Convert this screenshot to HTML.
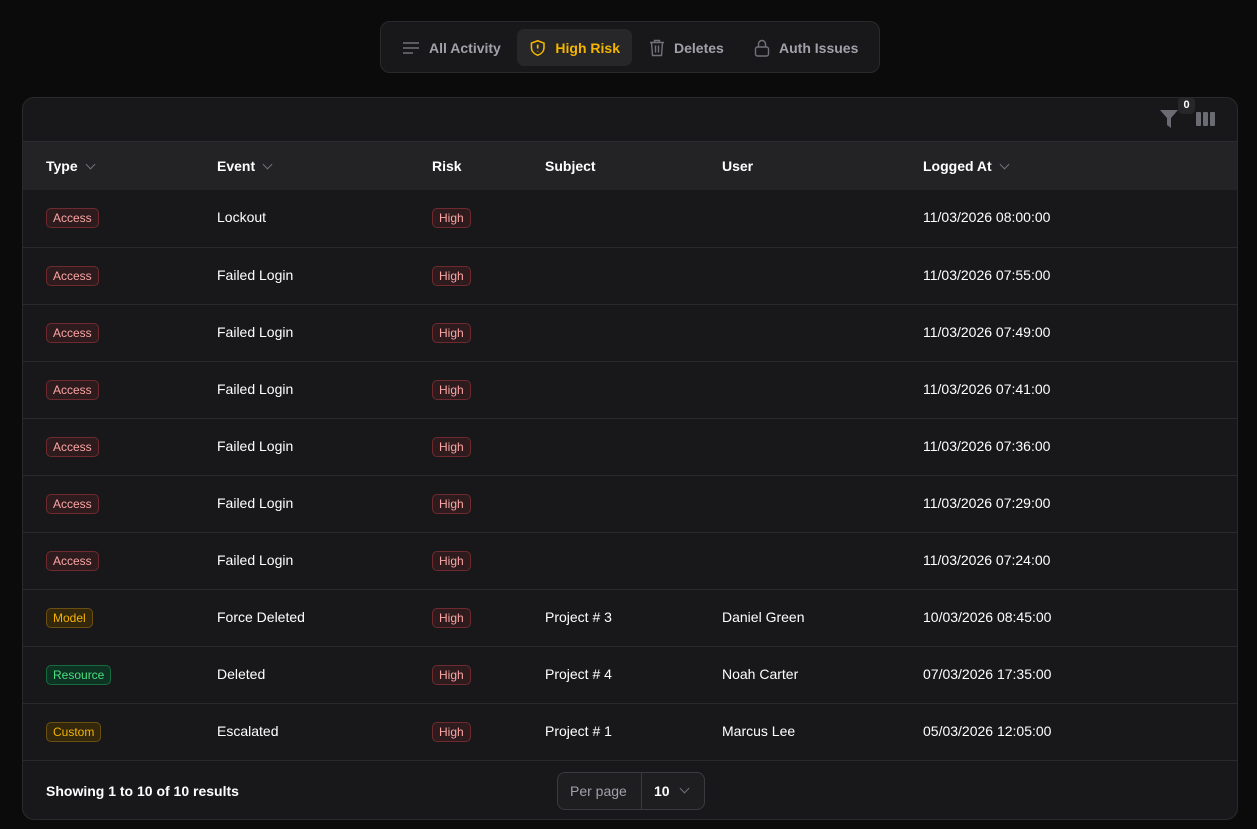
<!DOCTYPE html><html><head><style>
*{box-sizing:border-box;margin:0;padding:0}
body{width:1257px;height:829px;background:#0b0b0c;font-family:"Liberation Sans",sans-serif;color:#fff;position:relative;overflow:hidden}
.tabs{position:absolute;left:380px;top:21px;width:500px;height:52px;background:#18181b;border:1px solid #2a2a2d;border-radius:10px}
.tab{position:absolute;top:7px;height:37px;display:flex;align-items:center;font-size:14px;font-weight:bold;color:#a1a1aa;gap:9px;white-space:nowrap}
.tab.act{background:#27272a;border-radius:7px;color:#f5b400;padding:0 12px}
.card{position:absolute;left:22px;top:97px;width:1216px;height:723px;background:#18181b;border:1px solid #2a2a2d;border-radius:12px;overflow:hidden}
.hdr{position:absolute;left:0;top:43px;width:100%;height:49px;background:#232326;border-top:1px solid #2c2c30}
.c{position:absolute;font-size:14px;font-weight:bold;color:#fff;white-space:nowrap}
.row{position:absolute;left:0;width:100%;height:57px;border-top:1px solid #2a2a2d}
.b{position:absolute;top:18px;font-size:12px;padding:2px 6px;border-radius:5px;border:1px solid}
.red{color:#fca5a5;background:#2e1b1d;border-color:#6e2a2e}
.yel{color:#f5b400;background:#33270c;border-color:#6b4f10}
.grn{color:#4ade80;background:#0f3323;border-color:#166c3e}
.t{position:absolute;top:19px;font-size:14px;color:#fff}
.chev{display:inline-block;width:7px;height:7px;border-right:1.5px solid #71717a;border-bottom:1.5px solid #71717a;transform:rotate(45deg);margin-left:9px;position:relative;top:-3px}
</style></head><body>
<div class="tabs">
<div class="tab" style="left:21px"><svg width="18" height="14"><path d="M1 2h16M1 7h16M1 12h10" stroke="#71717a" stroke-width="1.5"/></svg>All Activity</div>
<div class="tab act" style="left:136px;width:115px"><svg width="18" height="18" viewBox="0 0 18 18"><path d="M9 1.5l6.5 2.5v4.5c0 4-3 6.8-6.5 8-3.5-1.2-6.5-4-6.5-8V4z" fill="none" stroke="#f5b400" stroke-width="1.6"/><path d="M9 5.5v4M9 12v.5" stroke="#f5b400" stroke-width="1.8"/></svg>High Risk</div>
<div class="tab" style="left:268px"><svg width="16" height="18" viewBox="0 0 16 18"><path d="M1 3.5h14M5.5 3.5V1.5h5v2M2.5 3.5l1 13h9l1-13M6.5 6.5v7M9.5 6.5v7" fill="none" stroke="#71717a" stroke-width="1.4"/></svg>Deletes</div>
<div class="tab" style="left:373px"><svg width="16" height="18" viewBox="0 0 16 18"><rect x="1.5" y="8" width="13" height="9" rx="2" fill="none" stroke="#71717a" stroke-width="1.4"/><path d="M4.5 8V5a3.5 3.5 0 0 1 7 0v3" fill="none" stroke="#71717a" stroke-width="1.4"/></svg>Auth Issues</div>
</div>
<div class="card">
<svg style="position:absolute;left:1137px;top:12px" width="18" height="18"><path d="M0 0h18l-7 8v10l-4-3V8z" fill="#6b6b73"/></svg>
<div style="position:absolute;left:1155px;top:-1px;width:17px;height:17px;background:#27272a;border-radius:5px;font-size:11px;font-weight:bold;text-align:center;line-height:17px;color:#fff">0</div>
<svg style="position:absolute;left:1173px;top:14px" width="19" height="14"><rect x="0" y="0" width="5" height="14" rx="1" fill="#6b6b73"/><rect x="7" y="0" width="5" height="14" rx="1" fill="#6b6b73"/><rect x="14" y="0" width="5" height="14" rx="1" fill="#6b6b73"/></svg>
<div class="hdr">
<div class="c" style="left:23px;top:16px">Type<span class="chev"></span></div>
<div class="c" style="left:194px;top:16px">Event<span class="chev"></span></div>
<div class="c" style="left:409px;top:16px">Risk</div>
<div class="c" style="left:522px;top:16px">Subject</div>
<div class="c" style="left:699px;top:16px">User</div>
<div class="c" style="left:900px;top:16px">Logged At<span class="chev"></span></div>
</div>
<div class="row" style="top:92px;border-top:none"><span class="b red" style="left:23px">Access</span><span class="t" style="left:194px">Lockout</span><span class="b red" style="left:409px">High</span><span class="t" style="left:900px">11/03/2026 08:00:00</span></div>
<div class="row" style="top:149px"><span class="b red" style="left:23px">Access</span><span class="t" style="left:194px">Failed Login</span><span class="b red" style="left:409px">High</span><span class="t" style="left:900px">11/03/2026 07:55:00</span></div>
<div class="row" style="top:206px"><span class="b red" style="left:23px">Access</span><span class="t" style="left:194px">Failed Login</span><span class="b red" style="left:409px">High</span><span class="t" style="left:900px">11/03/2026 07:49:00</span></div>
<div class="row" style="top:263px"><span class="b red" style="left:23px">Access</span><span class="t" style="left:194px">Failed Login</span><span class="b red" style="left:409px">High</span><span class="t" style="left:900px">11/03/2026 07:41:00</span></div>
<div class="row" style="top:320px"><span class="b red" style="left:23px">Access</span><span class="t" style="left:194px">Failed Login</span><span class="b red" style="left:409px">High</span><span class="t" style="left:900px">11/03/2026 07:36:00</span></div>
<div class="row" style="top:377px"><span class="b red" style="left:23px">Access</span><span class="t" style="left:194px">Failed Login</span><span class="b red" style="left:409px">High</span><span class="t" style="left:900px">11/03/2026 07:29:00</span></div>
<div class="row" style="top:434px"><span class="b red" style="left:23px">Access</span><span class="t" style="left:194px">Failed Login</span><span class="b red" style="left:409px">High</span><span class="t" style="left:900px">11/03/2026 07:24:00</span></div>
<div class="row" style="top:491px"><span class="b yel" style="left:23px">Model</span><span class="t" style="left:194px">Force Deleted</span><span class="b red" style="left:409px">High</span><span class="t" style="left:522px">Project # 3</span><span class="t" style="left:699px">Daniel Green</span><span class="t" style="left:900px">10/03/2026 08:45:00</span></div>
<div class="row" style="top:548px"><span class="b grn" style="left:23px">Resource</span><span class="t" style="left:194px">Deleted</span><span class="b red" style="left:409px">High</span><span class="t" style="left:522px">Project # 4</span><span class="t" style="left:699px">Noah Carter</span><span class="t" style="left:900px">07/03/2026 17:35:00</span></div>
<div class="row" style="top:605px"><span class="b yel" style="left:23px">Custom</span><span class="t" style="left:194px">Escalated</span><span class="b red" style="left:409px">High</span><span class="t" style="left:522px">Project # 1</span><span class="t" style="left:699px">Marcus Lee</span><span class="t" style="left:900px">05/03/2026 12:05:00</span></div>
<div class="row" style="top:662px;height:61px">
<span class="c" style="left:23px;top:22px">Showing 1 to 10 of 10 results</span>
<div style="position:absolute;left:534px;top:11px;width:148px;height:38px;border:1px solid #3a3a3f;border-radius:8px;background:#1e1e21">
<span style="position:absolute;left:12px;top:10px;font-size:14px;color:#a1a1aa">Per page</span>
<div style="position:absolute;left:83px;top:0;width:1px;height:36px;background:#3a3a3f"></div>
<span style="position:absolute;left:96px;top:10px;font-size:14px;font-weight:bold">10</span>
<span style="position:absolute;left:123px;top:12px;width:7px;height:7px;border-right:1.5px solid #71717a;border-bottom:1.5px solid #71717a;transform:rotate(45deg)"></span>
</div></div>
</div>
</body></html>
